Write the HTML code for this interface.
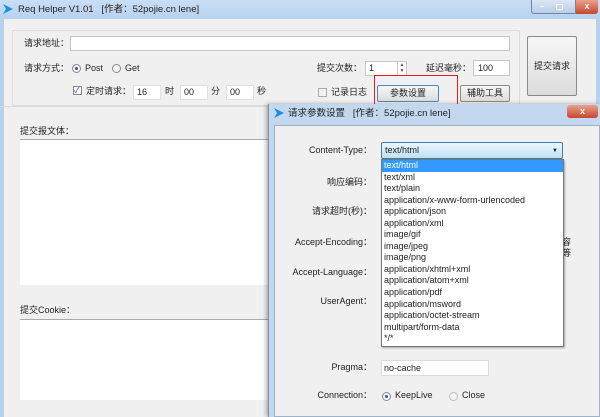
<!DOCTYPE html>
<html><head><meta charset="utf-8"><style>
*{box-sizing:border-box;margin:0;padding:0}
body{width:600px;height:417px;overflow:hidden;background:#f0f0f0;font-family:"Liberation Sans","Noto Sans CJK SC",sans-serif;font-size:9px;line-height:11px;color:#222;position:relative}
.a{position:absolute}
.in{position:absolute;background:#fff;border:1px solid #c8c8c8}
.btn{position:absolute;border:1px solid #8a8a8a;border-radius:2px;background:linear-gradient(#f6f6f6,#dcdcdc);text-align:center}
.r{position:absolute;width:9px;height:9px;border-radius:50%;border:1px solid #8a8a8a;background:#f4f4f4}
.r.on::after{content:"";position:absolute;left:2px;top:2px;width:3px;height:3px;border-radius:50%;background:#2a5a9a}
.lab{position:absolute;text-align:right;width:120px}
</style></head><body>
<div class="a" style="left:0;top:0;width:600px;height:19px;background:linear-gradient(#c9def4,#b7d2ef)"></div>
<svg class="a" style="left:3px;top:4px" width="10" height="10"><path d="M0 0L10 5L0 10L3 5Z" fill="#1e8fe0"/></svg>
<div class="a" style="left:18px;top:4px;font-size:9.5px">Req Helper V1.01 &nbsp;&nbsp;[作者：52pojie.cn lene]</div>
<div class="a" style="left:531px;top:0;width:45px;height:14px;border:1px solid #6d86a6;border-top:0;border-radius:0 0 0 3px;background:linear-gradient(#dbe7f5,#b9cde6);font-size:8px;color:#fff;font-weight:bold"><span class="a" style="left:8px;top:1px">–</span><span class="a" style="left:24px;top:1px;width:7px;height:6px;border:1px solid #fff;top:4px"></span></div>
<div class="a" style="left:576px;top:0;width:22px;height:14px;background:linear-gradient(#e9a08c,#c9452c);border-radius:0 0 3px 0;color:#fff;font-weight:bold;text-align:center;line-height:12px">x</div>
<div class="a" style="left:0;top:19px;width:4px;height:398px;background:#b7d2ef"></div>
<div class="a" style="left:596px;top:19px;width:4px;height:85px;background:#b7d2ef"></div>
<div class="a" style="left:12px;top:30px;width:508px;height:76px;border:1px solid #dcdcdc;border-radius:2px"></div>
<div class="a" style="left:24px;top:38px">请求地址：</div>
<div class="in" style="left:70px;top:36px;width:440px;height:15px"></div>
<div class="a" style="left:24px;top:63px">请求方式：</div>
<div class="r on" style="left:72px;top:64px"></div><div class="a" style="left:85px;top:63px">Post</div>
<div class="r" style="left:112px;top:64px"></div><div class="a" style="left:125px;top:63px">Get</div>
<div class="a" style="left:73px;top:86px;width:9px;height:9px;border:1px solid #8a8a8a;background:#fff;font-size:8px;line-height:7px;color:#2a4a8a">✓</div>
<div class="a" style="left:86px;top:86px">定时请求：</div>
<div class="in" style="left:133px;top:85px;width:28px;height:15px;border-color:#e0e0e0;padding:1px 3px">16</div>
<div class="a" style="left:165px;top:86px">时</div>
<div class="in" style="left:180px;top:85px;width:28px;height:15px;border-color:#e0e0e0;padding:1px 3px">00</div>
<div class="a" style="left:211px;top:86px">分</div>
<div class="in" style="left:226px;top:85px;width:28px;height:15px;border-color:#e0e0e0;padding:1px 3px">00</div>
<div class="a" style="left:257px;top:86px">秒</div>
<div class="a" style="left:317px;top:63px">提交次数：</div>
<div class="in" style="left:365px;top:61px;width:42px;height:15px;padding:1px 3px">1</div>
<div class="a" style="left:397px;top:62px;width:9px;height:13px;border-left:1px solid #ccc;font-size:5px;line-height:6px;text-align:center;color:#555">▲<br>▼</div>
<div class="a" style="left:426px;top:63px">延迟毫秒：</div>
<div class="in" style="left:473px;top:60px;width:37px;height:16px;padding:2px 4px">100</div>
<div class="a" style="left:318px;top:88px;width:9px;height:9px;border:1px solid #aaa;background:#f2f2f2"></div>
<div class="a" style="left:331px;top:87px">记录日志</div>
<div class="btn" style="left:377px;top:85px;width:62px;height:17px;line-height:15px;border-color:#4a8ac0">参数设置</div>
<div class="btn" style="left:460px;top:85px;width:50px;height:17px;line-height:15px">辅助工具</div>
<div class="a" style="left:374px;top:75px;width:84px;height:33px;border:1.5px solid #e02020"></div>
<div class="btn" style="left:527px;top:36px;width:50px;height:60px;line-height:58px">提交请求</div>
<div class="a" style="left:0;top:106px;width:268px;height:1px;background:#dcdcdc"></div>
<div class="a" style="left:20px;top:126px">提交报文体：</div>
<div class="a" style="left:20px;top:139px;width:250px;height:146px;background:#fff;border-top:1px solid #aaa"></div>
<div class="a" style="left:20px;top:305px">提交Cookie：</div>
<div class="a" style="left:20px;top:319px;width:250px;height:81px;background:#fff;border-top:1px solid #aaa"></div>
<div class="a" style="left:268px;top:104px;width:332px;height:313px;background:#c3d8ee;border-left:1px solid #7890ad;box-shadow:-2px 0 4px rgba(0,0,0,.3)"></div>
<svg class="a" style="left:274px;top:108px" width="10" height="10"><path d="M0 0L10 5L0 10L3 5Z" fill="#1e8fe0"/></svg>
<div class="a" style="left:288px;top:108px;font-size:9.5px">请求参数设置 &nbsp;&nbsp;[作者：52pojie.cn lene]</div>
<div class="a" style="left:567px;top:105px;width:31px;height:13px;background:linear-gradient(#e9a08c,#c9452c);border-radius:3px;color:#fff;font-weight:bold;text-align:center;line-height:12px">x</div>
<div class="a" style="left:274px;top:125px;width:326px;height:292px;background:#f0f0f0;border:1px solid #9fb3c8"></div>
<div class="lab" style="left:252px;top:145px">Content-Type：</div>
<div class="lab" style="left:252px;top:177px">响应编码：</div>
<div class="lab" style="left:252px;top:206px">请求超时(秒)：</div>
<div class="lab" style="left:252px;top:237px">Accept-Encoding：</div>
<div class="lab" style="left:252px;top:267px">Accept-Language：</div>
<div class="lab" style="left:252px;top:296px">UserAgent：</div>
<div class="lab" style="left:252px;top:362px">Pragma：</div>
<div class="lab" style="left:252px;top:390px">Connection：</div>
<div class="a" style="left:562px;top:237px">容<br>等</div>
<div class="a" style="left:381px;top:142px;width:182px;height:17px;border:1px solid #3c7fb1;border-radius:2px;background:linear-gradient(#eaf6fd,#bfe2f7);padding:2px 3px">text/html<span style="position:absolute;right:4px;top:3px;font-size:6px">▼</span></div>
<div class="a" style="left:381px;top:159px;width:183px;height:188px;background:#fff;border:1px solid #777;box-shadow:1px 1px 2px rgba(0,0,0,.3);line-height:11.55px;padding-left:2px">
<div style="background:#3399ff;color:#fff;margin-left:-2px;padding-left:2px">text/html</div>text/xml<br>text/plain<br>application/x-www-form-urlencoded<br>application/json<br>application/xml<br>image/gif<br>image/jpeg<br>image/png<br>application/xhtml+xml<br>application/atom+xml<br>application/pdf<br>application/msword<br>application/octet-stream<br>multipart/form-data<br>*/*</div>
<div class="in" style="left:381px;top:360px;width:108px;height:16px;border-color:#ddd;padding:2px 2px">no-cache</div>
<div class="r on" style="left:382px;top:392px"></div><div class="a" style="left:395px;top:390px">KeepLive</div>
<div class="r" style="left:449px;top:392px;border-color:#bbb"></div><div class="a" style="left:462px;top:390px">Close</div>
</body></html>
